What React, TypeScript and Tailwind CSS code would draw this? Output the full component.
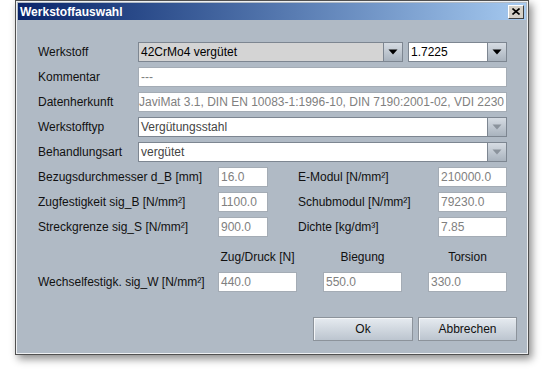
import React from "react";

const font = { fontFamily: '"Liberation Sans", Arial, sans-serif' };

function Arrow({ disabled }: { disabled?: boolean }) {
  return (
    <div className="w-[19px] h-full shrink-0 border-l border-[#7d8691] bg-gradient-to-b from-[#d6dce3] to-[#a9b3be] flex items-center justify-center">
      <svg width="10" height="6" viewBox="0 0 10 6">
        <path d="M0.5 0.5 L9.5 0.5 L5 5.5 Z" fill={disabled ? "#8b939c" : "#000"} />
      </svg>
    </div>
  );
}

function Combo({
  value,
  width,
  bg = "bg-white",
  disabled,
  text = "text-black",
}: {
  value: string;
  width: string;
  bg?: string;
  disabled?: boolean;
  text?: string;
}) {
  return (
    <div className={`${width} h-[20px] flex border border-[#7d8691] ${bg}`}>
      <div className={`flex-1 flex items-center pl-[2px] ${text} whitespace-nowrap overflow-hidden`}>{value}</div>
      <Arrow disabled={disabled} />
    </div>
  );
}

function Field({ value, width, dim = true, right }: { value: string; width: string; dim?: boolean; right?: boolean }) {
  return (
    <div
      className={`${width} h-[20px] shrink-0 bg-white border border-[#a4acb5] flex items-center px-[2px] whitespace-nowrap overflow-hidden ${
        right ? "justify-end" : ""
      } ${dim ? "text-[#808080]" : "text-[#444]"}`}
    >
      {value}
    </div>
  );
}

function Row({ label, children }: { label: string; children: React.ReactNode }) {
  return (
    <div className="flex items-center h-[20px]">
      <div className="w-[100px] shrink-0 text-[#111]">{label}</div>
      {children}
    </div>
  );
}

function PairRow({ l1, v1, l2, v2 }: { l1: string; v1: string; l2: string; v2: string }) {
  return (
    <div className="flex items-center h-[20px]">
      <div className="w-[180px] shrink-0 text-[#111]">{l1}</div>
      <Field value={v1} width="w-[50px]" />
      <div className="w-[140px] shrink-0 ml-[30px] text-[#111]">{l2}</div>
      <Field value={v2} width="w-[69px]" />
    </div>
  );
}

function Button({ label, width }: { label: string; width: string }) {
  return (
    <button
      className={`${width} h-[24px] border border-[#8c939b] bg-gradient-to-b from-[#e6ebf0] to-[#bcc5cf] text-[12px] text-[#111] shadow-[inset_1px_1px_0_#f4f6f8]`}
    >
      {label}
    </button>
  );
}

export default function App() {
  return (
    <div className="w-[546px] h-[370px] bg-white pl-[15px] text-[12px]" style={font}>
      <div className="w-[514px] h-[355px] border border-[#505050] shadow-[3px_4px_8px_rgba(0,0,0,0.45)]">
        <div className="w-full h-full border border-[#eef0f2] bg-[#b0bac5] flex flex-col">
          <div className="mx-[1px] mt-[1px] h-[17px] shrink-0 bg-gradient-to-r from-[#0a246a] to-[#a6caf0] flex items-center justify-between pl-[2px] pr-[2px]">
            <span className="text-white font-bold text-[12px] leading-none">Werkstoffauswahl</span>
            <div className="w-[16px] h-[14px] bg-[#d4d0c8] border border-t-white border-l-white border-r-[#404040] border-b-[#404040] flex items-center justify-center">
              <svg width="8" height="7" viewBox="0 0 8 7">
                <path d="M0.5 0.5 L7.5 6.5 M7.5 0.5 L0.5 6.5" stroke="#000" strokeWidth="1.6" />
              </svg>
            </div>
          </div>

          <div className="pl-[21px] pt-[22px] flex flex-col">
            <div className="flex flex-col gap-[5px]">
              <Row label="Werkstoff">
                <Combo value="42CrMo4 vergütet" width="w-[265px]" bg="bg-[#d4d4d4]" />
                <div className="ml-[5px]">
                  <Combo value="1.7225" width="w-[99px]" />
                </div>
              </Row>
              <Row label="Kommentar">
                <Field value="---" width="w-[369px]" dim />
              </Row>
              <Row label="Datenherkunft">
                <Field
                  value="JaviMat 3.1, DIN EN 10083-1:1996-10, DIN 7190:2001-02, VDI 2230"
                  width="w-[369px]"
                  right
                />
              </Row>
              <Row label="Werkstofftyp">
                <Combo value="Vergütungsstahl" width="w-[369px]" disabled text="text-[#444]" />
              </Row>
              <Row label="Behandlungsart">
                <Combo value="vergütet" width="w-[369px]" disabled text="text-[#444]" />
              </Row>
              <PairRow l1="Bezugsdurchmesser d_B [mm]" v1="16.0" l2="E-Modul [N/mm²]" v2="210000.0" />
              <PairRow l1="Zugfestigkeit sig_B [N/mm²]" v1="1100.0" l2="Schubmodul [N/mm²]" v2="79230.0" />
              <PairRow l1="Streckgrenze sig_S [N/mm²]" v1="900.0" l2="Dichte [kg/dm³]" v2="7.85" />
            </div>

            <div className="flex h-[14px] mt-[13px] items-center pl-[180px] gap-[26px] text-[#111]">
              <div className="w-[79px] text-center whitespace-nowrap">Zug/Druck [N]</div>
              <div className="w-[79px] text-center">Biegung</div>
              <div className="w-[79px] text-center">Torsion</div>
            </div>

            <div className="flex items-center h-[20px] mt-[8px]">
              <div className="w-[180px] shrink-0 text-[#111]">Wechselfestigk. sig_W [N/mm²]</div>
              <Field value="440.0" width="w-[79px]" />
              <div className="ml-[26px]">
                <Field value="550.0" width="w-[79px]" />
              </div>
              <div className="ml-[26px]">
                <Field value="330.0" width="w-[79px]" />
              </div>
            </div>

            <div className="flex mt-[25px] ml-[275px] gap-[5px]">
              <Button label="Ok" width="w-[100px]" />
              <Button label="Abbrechen" width="w-[99px]" />
            </div>
          </div>
        </div>
      </div>
    </div>
  );
}
